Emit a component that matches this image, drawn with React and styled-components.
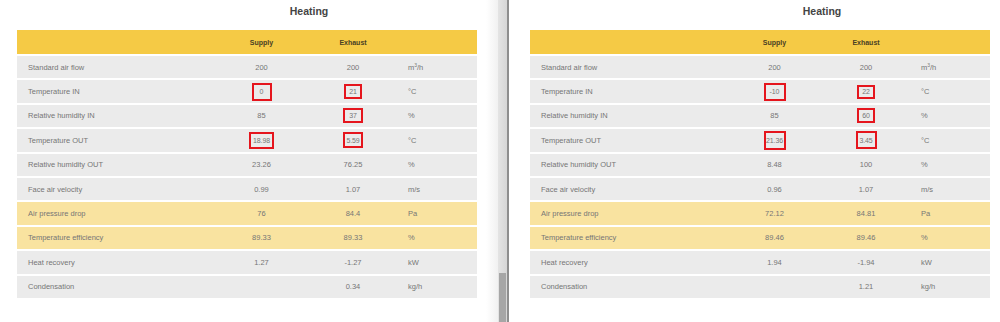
import React from 'react'
import styled, { createGlobalStyle } from 'styled-components'

const GlobalStyle = createGlobalStyle`
  html, body {
    margin: 0;
    padding: 0;
    background: #fff;
  }
  body {
    font-family: 'Liberation Sans', Arial, sans-serif;
  }
`

const Screen = styled.div`
  display: flex;
  width: 1000px;
  height: 322px;
  overflow: hidden;
  background: #fff;
`

const Pane = styled.div`
  flex: none;
  width: ${(p) => p.$width}px;
  padding-left: ${(p) => p.$inset}px;
  box-sizing: border-box;
  overflow: hidden;
  background: ${(p) =>
    p.$shaded
      ? 'linear-gradient(to right, #fff calc(100% - 12px), #f1f1f1)'
      : '#fff'};
`

const Scrollbar = styled.div`
  flex: none;
  width: 9px;
  display: flex;
  flex-direction: column;
  justify-content: flex-end;
  background: linear-gradient(to right, #e4e4e4, #d6d6d6);
`

const Thumb = styled.div`
  height: 49px;
  margin: 0 1px;
  background: #a6a6a6;
`

const Divider = styled.div`
  flex: none;
  width: 2px;
  background: #8e8e8e;
`

const Title = styled.h2`
  width: 584px;
  margin: 0;
  padding: 5px 0 13px;
  text-align: center;
  font-size: 10.5px;
  line-height: 12px;
  font-weight: bold;
  color: #444;
`

const Table = styled.table`
  width: 460px;
  table-layout: fixed;
  border-collapse: separate;
  border-spacing: 0;
  font-size: 7.5px;
  color: #767676;
`

const HeadCell = styled.th`
  width: ${(p) => p.$w}px;
  height: 24px;
  padding: 0;
  background: #f5ca45;
  font-size: 7px;
  font-weight: bold;
  color: #4a4124;
  text-align: center;
`

const Row = styled.tr`
  td {
    background: ${(p) => (p.$highlight ? '#f9e3a0' : '#ebebeb')};
  }
`

const Cell = styled.td`
  height: 22.4px;
  padding: 0 0 0 ${(p) => (p.$label ? 11 : p.$unit ? 9 : 0)}px;
  border-top: 2px solid #fff;
  text-align: ${(p) => (p.$label || p.$unit ? 'left' : 'center')};
  vertical-align: middle;
  white-space: nowrap;
`

const Boxed = styled.span`
  display: inline-flex;
  align-items: center;
  justify-content: center;
  box-sizing: border-box;
  width: ${(p) => p.$w}px;
  height: ${(p) => p.$h}px;
  border: 2px solid #e5151d;
  font-size: 7px;
  letter-spacing: -0.1px;
  vertical-align: middle;
`

const Sup = styled.sup`
  font-size: 5px;
  line-height: 0;
  vertical-align: 3px;
`

const Value = ({ v }) => {
  if (v === null || v === undefined) return null
  if (typeof v === 'object') {
    return (
      <Boxed $w={v.w} $h={v.h}>
        {v.t}
      </Boxed>
    )
  }
  return v
}

const Unit = ({ u }) =>
  u === 'm3/h' ? (
    <>
      m<Sup>3</Sup>/h
    </>
  ) : (
    u
  )

const leftRows = [
  ['Standard air flow', '200', '200', 'm3/h'],
  ['Temperature IN', { t: '0', w: 20, h: 18 }, { t: '21', w: 18, h: 15 }, '°C'],
  ['Relative humidity IN', '85', { t: '37', w: 20, h: 15 }, '%'],
  ['Temperature OUT', { t: '18.98', w: 25, h: 17 }, { t: '5.59', w: 20, h: 16 }, '°C'],
  ['Relative humidity OUT', '23.26', '76.25', '%'],
  ['Face air velocity', '0.99', '1.07', 'm/s'],
  ['Air pressure drop', '76', '84.4', 'Pa', true],
  ['Temperature efficiency', '89.33', '89.33', '%', true],
  ['Heat recovery', '1.27', '-1.27', 'kW'],
  ['Condensation', null, '0.34', 'kg/h'],
]

const rightRows = [
  ['Standard air flow', '200', '200', 'm3/h'],
  ['Temperature IN', { t: '-10', w: 22, h: 18 }, { t: '22', w: 18, h: 14 }, '°C'],
  ['Relative humidity IN', '85', { t: '60', w: 18, h: 15 }, '%'],
  ['Temperature OUT', { t: '21.36', w: 22, h: 19 }, { t: '3.45', w: 21, h: 18 }, '°C'],
  ['Relative humidity OUT', '8.48', '100', '%'],
  ['Face air velocity', '0.96', '1.07', 'm/s'],
  ['Air pressure drop', '72.12', '84.81', 'Pa', true],
  ['Temperature efficiency', '89.46', '89.46', '%', true],
  ['Heat recovery', '1.94', '-1.94', 'kW'],
  ['Condensation', null, '1.21', 'kg/h'],
]

const HeatingTable = ({ rows }) => (
  <>
    <Title>Heating</Title>
    <Table>
      <thead>
        <tr>
          <HeadCell $w={199}></HeadCell>
          <HeadCell $w={91}>Supply</HeadCell>
          <HeadCell $w={92}>Exhaust</HeadCell>
          <HeadCell $w={78}></HeadCell>
        </tr>
      </thead>
      <tbody>
        {rows.map(([label, supply, exhaust, unit, highlight]) => (
          <Row key={label} $highlight={highlight}>
            <Cell $label>{label}</Cell>
            <Cell>
              <Value v={supply} />
            </Cell>
            <Cell>
              <Value v={exhaust} />
            </Cell>
            <Cell $unit>
              <Unit u={unit} />
            </Cell>
          </Row>
        ))}
      </tbody>
    </Table>
  </>
)

const App = () => (
  <>
    <GlobalStyle />
    <Screen>
      <Pane $width={498} $inset={17} $shaded>
        <HeatingTable rows={leftRows} />
      </Pane>
      <Scrollbar>
        <Thumb />
      </Scrollbar>
      <Divider />
      <Pane $width={491} $inset={21}>
        <HeatingTable rows={rightRows} />
      </Pane>
    </Screen>
  </>
)

export default App
